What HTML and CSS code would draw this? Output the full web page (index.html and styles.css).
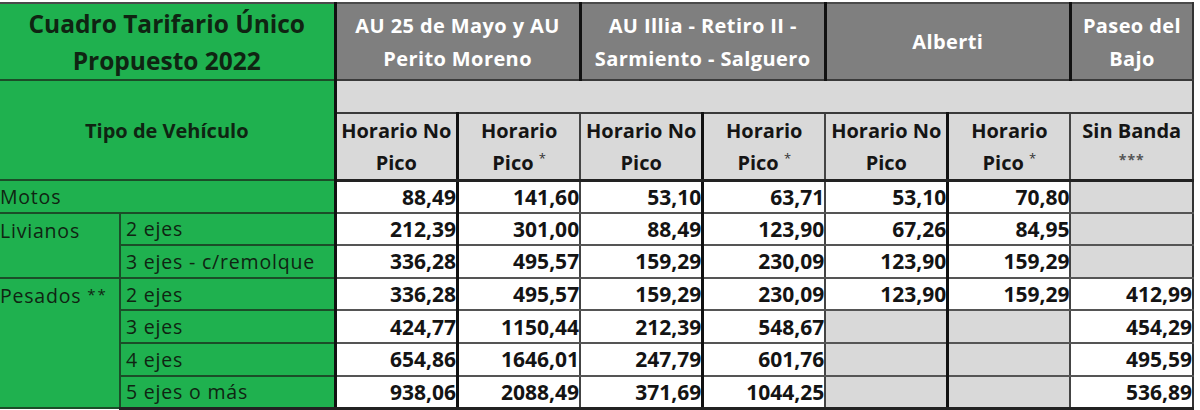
FILE: index.html
```html
<!DOCTYPE html>
<html lang="es">
<head>
<meta charset="utf-8">
<title>Cuadro Tarifario Único Propuesto 2022</title>
<link rel="stylesheet" href="styles.css">
</head>
<body>
<table class="tariff">
  <colgroup>
    <col class="c-a"><col class="c-b">
    <col class="c-n"><col class="c-n"><col class="c-n"><col class="c-n"><col class="c-n"><col class="c-n"><col class="c-n">
  </colgroup>
  <tr class="r-head">
    <th colspan="2" class="title">Cuadro Tarifario Único<br>Propuesto 2022</th>
    <th colspan="2" class="grp g-first">AU 25 de Mayo y AU<br>Perito Moreno</th>
    <th colspan="2" class="grp">AU Illia - Retiro II -<br>Sarmiento - Salguero</th>
    <th colspan="2" class="grp">Alberti</th>
    <th class="grp g-last">Paseo del<br>Bajo</th>
  </tr>
  <tr class="r-strip">
    <th colspan="2" rowspan="2" class="tipo">Tipo de Vehículo</th>
    <td colspan="7" class="strip"></td>
  </tr>
  <tr class="r-sub">
    <th class="sub g-first">Horario No<br>Pico</th>
    <th class="sub thin">Horario<br>Pico <sup>*</sup></th>
    <th class="sub">Horario No<br>Pico</th>
    <th class="sub thin">Horario<br>Pico <sup>*</sup></th>
    <th class="sub">Horario No<br>Pico</th>
    <th class="sub thin">Horario<br>Pico <sup>*</sup></th>
    <th class="sub g-last">Sin Banda<br><sup class="stars">***</sup></th>
  </tr>
  <tr class="r-data">
    <td colspan="2" class="lbl">Motos</td>
    <td class="num g-first">88,49</td><td class="num thin">141,60</td>
    <td class="num">53,10</td><td class="num thin">63,71</td>
    <td class="num">53,10</td><td class="num thin">70,80</td>
    <td class="num empty g-last"></td>
  </tr>
  <tr class="r-data">
    <td rowspan="2" class="lbl cat">Livianos</td><td class="lbl sub-lbl">2 ejes</td>
    <td class="num g-first">212,39</td><td class="num thin">301,00</td>
    <td class="num">88,49</td><td class="num thin">123,90</td>
    <td class="num">67,26</td><td class="num thin">84,95</td>
    <td class="num empty g-last"></td>
  </tr>
  <tr class="r-data">
    <td class="lbl sub-lbl">3 ejes - c/remolque</td>
    <td class="num g-first">336,28</td><td class="num thin">495,57</td>
    <td class="num">159,29</td><td class="num thin">230,09</td>
    <td class="num">123,90</td><td class="num thin">159,29</td>
    <td class="num empty g-last"></td>
  </tr>
  <tr class="r-data">
    <td rowspan="4" class="lbl cat">Pesados <span class="ast">**</span></td><td class="lbl sub-lbl">2 ejes</td>
    <td class="num g-first">336,28</td><td class="num thin">495,57</td>
    <td class="num">159,29</td><td class="num thin">230,09</td>
    <td class="num">123,90</td><td class="num thin">159,29</td>
    <td class="num g-last">412,99</td>
  </tr>
  <tr class="r-data">
    <td class="lbl sub-lbl">3 ejes</td>
    <td class="num g-first">424,77</td><td class="num thin">1150,44</td>
    <td class="num">212,39</td><td class="num thin">548,67</td>
    <td class="num empty"></td><td class="num empty thin"></td>
    <td class="num g-last">454,29</td>
  </tr>
  <tr class="r-data">
    <td class="lbl sub-lbl">4 ejes</td>
    <td class="num g-first">654,86</td><td class="num thin">1646,01</td>
    <td class="num">247,79</td><td class="num thin">601,76</td>
    <td class="num empty"></td><td class="num empty thin"></td>
    <td class="num g-last">495,59</td>
  </tr>
  <tr class="r-data r-last">
    <td class="lbl sub-lbl">5 ejes o más</td>
    <td class="num g-first">938,06</td><td class="num thin">2088,49</td>
    <td class="num">371,69</td><td class="num thin">1044,25</td>
    <td class="num empty"></td><td class="num empty thin"></td>
    <td class="num g-last">536,89</td>
  </tr>
</table>
</body>
</html>
```

FILE: styles.css
```css
html, body {
  margin: 0;
  padding: 0;
  background: #ffffff;
}

body {
  padding-top: 2px;
  font-family: "Open Sans", "Liberation Sans", sans-serif;
}

.tariff {
  border-collapse: collapse;
  table-layout: fixed;
  width: 1193px;
  border-top: 2px solid #4a4a4a;
}

.c-a { width: 120px; }
.c-b { width: 215px; }
.c-n { width: 122.57px; }

.tariff th,
.tariff td {
  padding: 0;
  overflow: hidden;
  white-space: nowrap;
}

/* header row 1 */
.r-head { height: 77px; }

.title {
  background: #1fb14f;
  color: #0f2412;
  font-size: 24.5px;
  line-height: 37px;
  font-weight: 700;
  text-align: center;
  padding-top: 3px;
  border-right: 3px solid #111;
  border-bottom: 2px solid #1b4d28;
}

.grp {
  background: #7f7f7f;
  color: #ffffff;
  font-size: 20px;
  letter-spacing: 0.4px;
  line-height: 33px;
  font-weight: 700;
  text-align: center;
  padding-top: 3px;
  border-right: 3px solid #111;
  border-bottom: 2px solid #3a3a3a;
}

.g-last { border-right: 2px solid #333; }

/* gray strip */
.r-strip { height: 33px; }

.strip {
  background: #d9d9d9;
  border-bottom: 2px solid #3a3a3a;
  border-right: 2px solid #333;
}

.tipo {
  background: #1fb14f;
  color: #0f2412;
  font-size: 20px;
  font-weight: 700;
  text-align: center;
  vertical-align: middle;
  padding-bottom: 4px;
  border-right: 3px solid #111;
  border-bottom: 2px solid #1b4d28;
}

/* sub header */
.r-sub { height: 67px; }

.sub {
  background: #d9d9d9;
  color: #151515;
  font-size: 20px;
  line-height: 32px;
  font-weight: 700;
  text-align: center;
  vertical-align: bottom;
  padding-bottom: 0;
  border-right: 3px solid #111;
  border-bottom: 3px solid #222;
}

.sub.thin,
.num.thin { border-right: 2px solid #444; }

.sub.g-last { border-right: 2px solid #333; }

.sub sup {
  font-size: 13px;
  font-weight: 400;
  color: #333;
  vertical-align: 7px;
  line-height: 0;
}

.sub .stars {
  font-size: 14px;
  font-weight: 700;
  color: #555;
  letter-spacing: 1px;
  vertical-align: 5px;
}

/* data rows */
.r-data { height: 32.6px; }

.lbl {
  background: #1fb14f;
  color: #0f2412;
  font-size: 19.5px;
  letter-spacing: 0.8px;
  font-weight: 400;
  text-align: left;
  vertical-align: middle;
  padding-left: 4px;
  padding-top: 1px;
  border-bottom: 2px solid #1b4d28;
  border-right: 3px solid #111;
}

.lbl.cat {
  vertical-align: top;
  padding-top: 3px;
  border-right: 2px solid #1b4d28;
}

.lbl .ast {
  font-size: 15px;
  letter-spacing: 2px;
  vertical-align: 3px;
}

.lbl.sub-lbl { padding-left: 5px; }

.num {
  background: #ffffff;
  color: #141414;
  font-size: 21px;
  font-weight: 700;
  text-align: right;
  vertical-align: middle;
  padding-right: 4px;
  padding-top: 3px;
  border-bottom: 2px solid #555;
  border-right: 3px solid #111;
}

.num.empty { background: #d9d9d9; }

.num.g-last { border-right: 2px solid #333; }

.r-last .num,
.r-last .lbl { border-bottom: 3px solid #222; }
```
